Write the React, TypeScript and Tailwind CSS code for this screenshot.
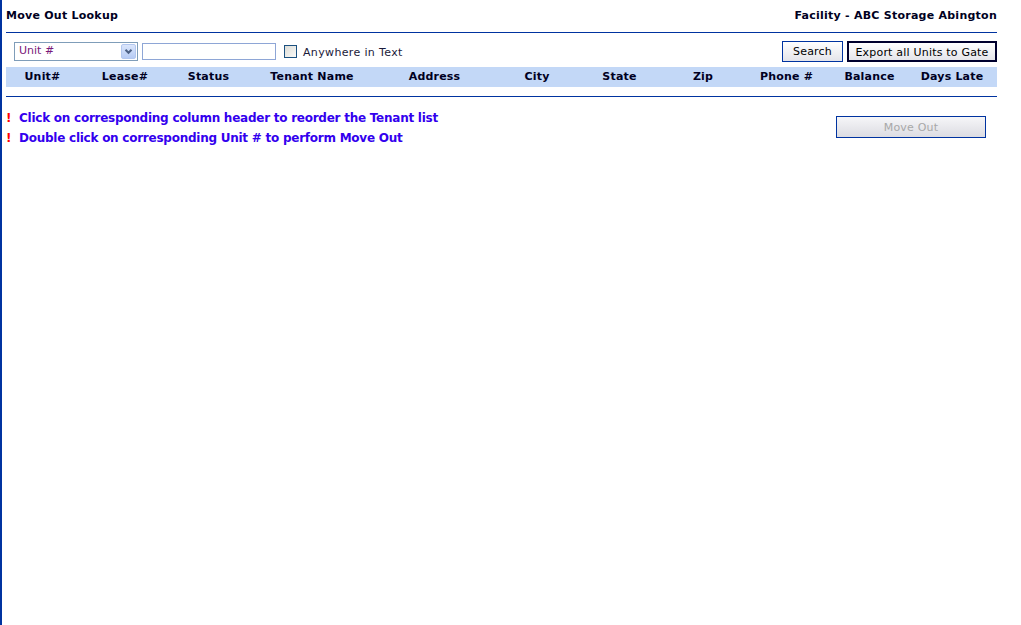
import React from "react";

const cols = [
  "Unit#",
  "Lease#",
  "Status",
  "Tenant Name",
  "Address",
  "City",
  "State",
  "Zip",
  "Phone #",
  "Balance",
  "Days Late",
];

export default function App() {
  return (
    <div
      className="w-full h-[625px] bg-white border-l-2 border-[#0033a0] overflow-hidden"
      style={{ fontFamily: '"DejaVu Sans", Verdana, sans-serif' }}
    >
      <div className="ml-[4px] w-[991px]">
        <div className="h-[33px] pt-[0px] flex items-center justify-between border-b border-[#0033a0] text-[11px] font-bold tracking-[0.25px] text-[#000022]">
          <span>Move Out Lookup</span>
          <span>Facility - ABC Storage Abington</span>
        </div>

        <div className="mt-[8px] h-[20px] flex items-center">
          <div className="ml-[8px] w-[124px] h-[19px] border border-[#7f9db9] flex items-center justify-between bg-white">
            <span className="pl-[4px] pt-[1px] text-[11px] text-[#7a1a7a]">Unit #</span>
            <span className="mr-[1px] w-[15px] h-[15px] rounded-[2px] bg-gradient-to-b from-[#dbe6fb] to-[#b6cbf5] border border-[#b3c7ef] flex items-center justify-center">
              <svg width="9" height="7" viewBox="0 0 9 7">
                <path d="M1.5 1.8 L4.5 4.8 L7.5 1.8" fill="none" stroke="#4d6185" strokeWidth="2" />
              </svg>
            </span>
          </div>
          <div className="ml-[4px] w-[134px] h-[17px] border border-[#8ea6d6] bg-white" />
          <div className="ml-[8px] w-[13px] h-[13px] border border-[#1c5180] bg-gradient-to-br from-[#dcdcd6] to-[#fafaf8]" />
          <span className="ml-[6px] mt-[5px] text-[11px] tracking-[0.35px] text-[#1a1a3a]">Anywhere in Text</span>
          <div className="flex-1" />
          <button className="w-[61px] h-[21px] pt-[2px] border border-[#0033a0] bg-gradient-to-b from-white to-[#e4e4ea] text-[11px] tracking-[0.2px] text-black">
            Search
          </button>
          <button className="ml-[4px] w-[150px] h-[21px] pt-[2px] border-2 border-[#00002e] bg-gradient-to-b from-white to-[#e4e4ea] text-[11px] tracking-[0.2px] text-black">
            Export all Units to Gate
          </button>
        </div>

        <div className="mt-[6px] h-[20px] pt-[1px] bg-[#c3d8f7] grid grid-cols-[73px_92px_75px_132px_113px_92px_73px_94px_73px_93px_72px] items-center text-[11px] font-bold tracking-[0.2px] text-[#000022]">
          {cols.map((c) => (
            <div key={c} className="text-center whitespace-nowrap">
              {c}
            </div>
          ))}
        </div>

        <div className="mt-[9px] border-b border-[#0033a0]" />

        <div className="mt-[11px] flex justify-between">
          <div className="text-[12px] font-bold leading-[20px] tracking-[-0.25px]">
            <div className="flex">
              <span className="w-[13px] text-[#ff0000]">!</span>
              <span className="text-[#3300ee]">Click on corresponding column header to reorder the Tenant list</span>
            </div>
            <div className="flex">
              <span className="w-[13px] text-[#ff0000]">!</span>
              <span className="text-[#3300ee]">Double click on corresponding Unit # to perform Move Out</span>
            </div>
          </div>
          <button
            disabled
            className="mt-[8px] mr-[11px] w-[150px] h-[22px] pt-[2px] border border-[#0033a0] bg-gradient-to-b from-[#f6f6f8] to-[#dcdce2] text-[11px] tracking-[0.2px] text-[#a8a8a8]"
          >
            Move Out
          </button>
        </div>
      </div>
    </div>
  );
}
